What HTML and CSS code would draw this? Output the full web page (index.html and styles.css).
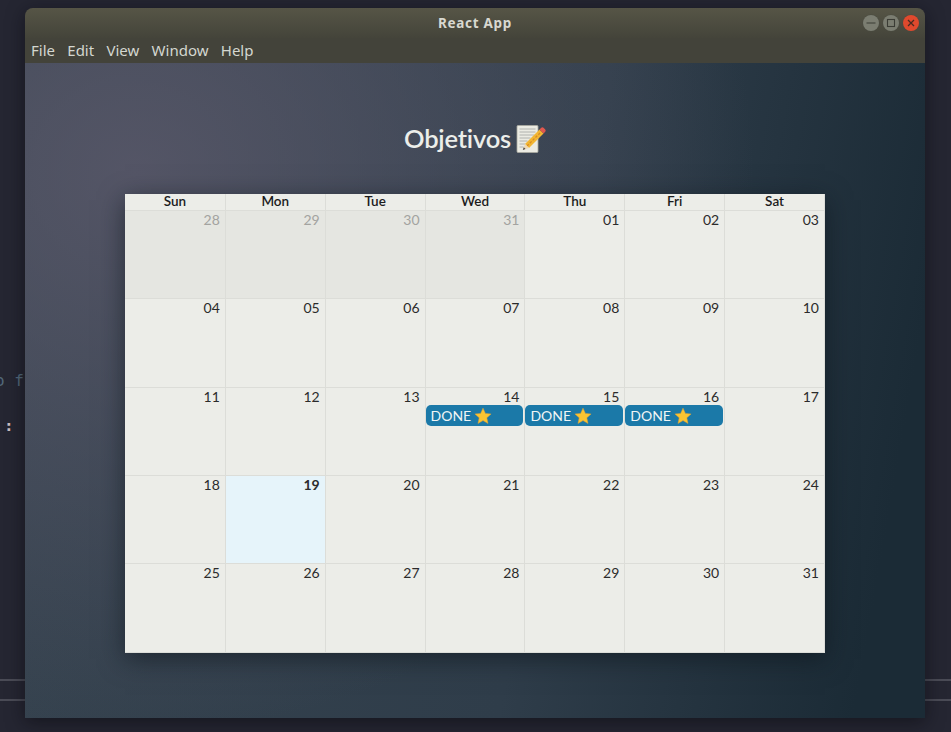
FILE: index.html
```html
<!DOCTYPE html>
<html lang="en">
<head>
<meta charset="utf-8">
<title>React App</title>
<link rel="stylesheet" href="styles.css">
</head>
<body>
<div class="behind">
  <span class="code code-a">o f</span>
  <span class="code code-b">:</span>
  <i class="rule rule-a"></i>
  <i class="rule rule-b"></i>
</div>
<main class="window">
  <header class="titlebar">
    <span class="title">React App</span>
    <div class="controls">
      <span class="ctl"><svg width="16" height="16" viewBox="0 0 16 16"><path d="M3.500 8h9" stroke="#3b3c35" stroke-width="1.200"/></svg></span>
      <span class="ctl"><svg width="16" height="16" viewBox="0 0 16 16"><rect x="4.500" y="4.500" width="7" height="7" fill="none" stroke="#3b3c35" stroke-width="1.100"/></svg></span>
      <span class="ctl ctl-close"><svg width="16" height="16" viewBox="0 0 16 16"><path d="M5 5l6 6M11 5l-6 6" stroke="#4a2a20" stroke-width="1.300"/></svg></span>
    </div>
  </header>
  <nav class="menubar">
    <span>File</span><span>Edit</span><span>View</span><span>Window</span><span>Help</span>
  </nav>
  <section class="content">
    <h1 class="heading">Objetivos
      <svg class="memo" width="30" height="30" viewBox="0 0 30 30">
        <rect x="1" y="1.500" width="21" height="27" rx="1" fill="#ebebe3" stroke="#a9a9a0" stroke-width=".8"/>
        <path d="M3.500 5h16M3.500 8h16M3.500 11h15M3.500 14h11M3.500 17h8M3.500 20h6M3.500 23h4" stroke="#b0b2ae" stroke-width="1"/>
        <path d="M9 20L23.500 5.500l4 4L13 24z" fill="#f2b632"/>
        <path d="M11 22L25.500 7.500" stroke="#d98d24" stroke-width="1.300" stroke-dasharray="2.500 1.500"/>
        <path d="M23.500 5.500l1.500-1.500a2 2 0 0 1 2.800 0l1.200 1.200a2 2 0 0 1 0 2.800l-1.500 1.500z" fill="#e0584e"/>
        <path d="M9 20l-2.200 6 6.200-2z" fill="#eed9b5"/>
        <path d="M7.800 23.300l-1 2.700 2.700-1z" fill="#444"/>
      </svg>
    </h1>
    <div class="calendar">
      <div class="head">
        <div>Sun</div><div>Mon</div><div>Tue</div><div>Wed</div><div>Thu</div><div>Fri</div><div>Sat</div>
      </div>
      <div class="week">
        <div class="day off">28</div><div class="day off">29</div><div class="day off">30</div><div class="day off">31</div><div class="day">01</div><div class="day">02</div><div class="day">03</div>
      </div>
      <div class="week">
        <div class="day">04</div><div class="day">05</div><div class="day">06</div><div class="day">07</div><div class="day">08</div><div class="day">09</div><div class="day">10</div>
      </div>
      <div class="week">
        <div class="day">11</div><div class="day">12</div><div class="day">13</div>
        <div class="day">14<div class="event">DONE <svg class="star" width="18" height="18" viewBox="0 0 24 24"><path d="M12 1.500l3.200 7 7.600.800-5.700 5.100 1.600 7.500L12 18.100l-6.700 3.800 1.600-7.500L1.200 9.300l7.600-.800z" fill="#fbc531" stroke="#d9a03a" stroke-width=".7"/></svg></div></div>
        <div class="day">15<div class="event">DONE <svg class="star" width="18" height="18" viewBox="0 0 24 24"><path d="M12 1.500l3.200 7 7.600.800-5.700 5.100 1.600 7.500L12 18.100l-6.700 3.800 1.600-7.500L1.200 9.300l7.600-.800z" fill="#fbc531" stroke="#d9a03a" stroke-width=".7"/></svg></div></div>
        <div class="day">16<div class="event">DONE <svg class="star" width="18" height="18" viewBox="0 0 24 24"><path d="M12 1.500l3.200 7 7.600.800-5.700 5.100 1.600 7.500L12 18.100l-6.700 3.800 1.600-7.500L1.200 9.300l7.600-.800z" fill="#fbc531" stroke="#d9a03a" stroke-width=".7"/></svg></div></div>
        <div class="day">17</div>
      </div>
      <div class="week">
        <div class="day">18</div><div class="day today">19</div><div class="day">20</div><div class="day">21</div><div class="day">22</div><div class="day">23</div><div class="day">24</div>
      </div>
      <div class="week">
        <div class="day">25</div><div class="day">26</div><div class="day">27</div><div class="day">28</div><div class="day">29</div><div class="day">30</div><div class="day">31</div>
      </div>
    </div>
  </section>
</main>
</body>
</html>
```
FILE: styles.css
```css
* { box-sizing: border-box; }
html, body { margin: 0; height: 100%; }
body {
  position: relative;
  width: 951px;
  height: 732px;
  overflow: hidden;
  background: #252632;
  padding: 8px 26px 14px 25px;
  font-family: "Lato", sans-serif;
}
.behind { position: absolute; inset: 0; }
.code {
  position: absolute;
  font-family: "DejaVu Sans Mono", monospace;
  font-size: 16px;
  line-height: 18px;
  color: #52687a;
}
.code-a { left: -5px; top: 372px; white-space: pre; }
.code-b { left: 4px; top: 417px; color: #c9bcc2; font-weight: bold; }
.rule { position: absolute; left: 0; right: 0; height: 2px; background: #4a4b56; }
.rule-a { top: 679px; }
.rule-b { top: 699px; }

.window {
  position: relative;
  height: 710px;
  display: flex;
  flex-direction: column;
  border-radius: 8px 8px 0 0;
  overflow: hidden;
  box-shadow: 0 4px 18px rgba(10, 10, 14, 0.55);
}
.titlebar {
  position: relative;
  height: 30px;
  flex: none;
  display: flex;
  align-items: center;
  justify-content: center;
  background: linear-gradient(#565546, #44443a);
}
.title {
  font-family: "Noto Sans", sans-serif;
  font-weight: 700;
  font-size: 13.5px;
  letter-spacing: 0.7px;
  color: #d8d8d0;
}
.controls {
  position: absolute;
  right: 6px;
  top: 7px;
  display: flex;
  gap: 4px;
}
.ctl {
  width: 16px;
  height: 16px;
  border-radius: 50%;
  background: #7b7d71;
  box-shadow: 0 0 0 .5px #4a4b40;
  display: block;
}
.ctl svg { display: block; }
.ctl-close { background: #e0492d; }
.menubar {
  height: 25px;
  flex: none;
  display: flex;
  align-items: center;
  gap: 12.3px;
  padding: 0 6px 2px 6px;
  background: #43433a;
  font-family: "Noto Sans", sans-serif;
  font-size: 15px;
  color: #d4d7d0;
}
.content {
  flex: 1;
  padding-top: 59px;
  background:
    radial-gradient(ellipse 620px 560px at 110px 110px, rgba(92, 90, 108, .8), rgba(92, 90, 108, 0) 100%),
    linear-gradient(100deg, #36434f 0%, #2f3d4a 58%, #1b2b36 93%, #1b2b36 100%);
}
.heading {
  margin: 0 0 39px;
  height: 33px;
  display: flex;
  justify-content: center;
  align-items: center;
  gap: 5px;
  font-size: 25.5px;
  font-weight: 600;
  line-height: 33px;
  letter-spacing: -0.2px;
  color: #eceeea;
}
.memo { display: block; }
.calendar {
  width: 700px;
  margin: 0 auto;
  height: 459px;
  display: grid;
  grid-template-rows: 17px 88px 89px 88px 88px 88px;
  background: #ecede8;
  box-shadow: 0 6px 24px rgba(12, 20, 26, 0.6);
  border-bottom: 1px solid #dcddd8;
  border-right: 1px solid #dcddd8;
}
.head {
  display: grid;
  grid-template-columns: repeat(7, 1fr);
  font-size: 13.5px;
  font-weight: 600;
  line-height: 15px;
  text-align: center;
  color: #1c1c1c;
  border-bottom: 1px solid #dcddd8;
}
.head > div + div { border-left: 1px solid #dcddd8; }
.week {
  display: grid;
  grid-template-columns: repeat(7, 1fr);
  border-bottom: 1px solid #dcddd8;
}
.week:last-child { border-bottom: 0; }
.day {
  padding: 0 5px 0 0;
  text-align: right;
  font-size: 14px;
  line-height: 17px;
  color: #2b2b2b;
  min-width: 0;
}
.day + .day { border-left: 1px solid #dcddd8; }
.off { background: #e5e6e1; color: #a3a3a0; }
.today { background: #e6f4fa; font-weight: 700; }
.event {
  height: 21px;
  margin-right: -4px;
  padding-left: 5px;
  display: flex;
  align-items: center;
  gap: 3px;
  background: #1b79a8;
  border-radius: 5px;
  color: #f1f5f5;
  font-size: 14px;
  text-align: left;
}
.star { display: block; }
```
